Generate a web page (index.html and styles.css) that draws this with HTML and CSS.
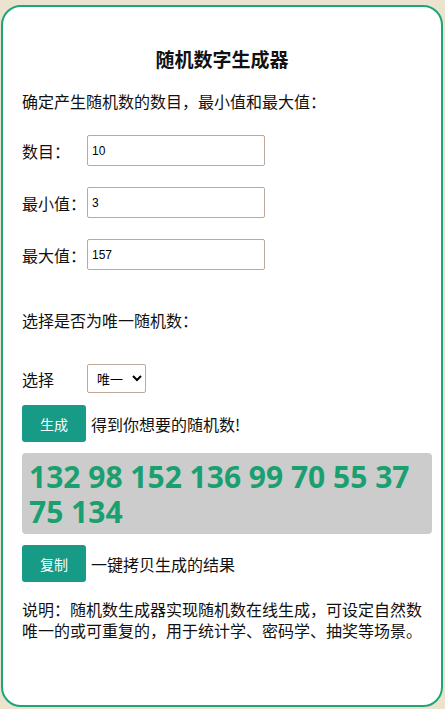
FILE: index.html
```html
<!DOCTYPE html>
<html>
	<head>
		<meta charset="utf-8" />
		<title>随机数字生成器</title>
		<link rel="stylesheet" href="styles.css">
	</head>
	<body>
		<div class="card">
			<h1 class="title">随机数字生成器</h1>
			<p class="intro">确定产生随机数的数目，最小值和最大值：</p>
			<div class="row">
				<label class="label">数目：</label>
				<input class="field" type="text" value="10">
			</div>
			<div class="row">
				<label class="label">最小值：</label>
				<input class="field" type="text" value="3">
			</div>
			<div class="row">
				<label class="label">最大值：</label>
				<input class="field" type="text" value="157">
			</div>
			<p class="question">选择是否为唯一随机数：</p>
			<div class="row select-row">
				<label class="label">选择</label>
				<select class="choice">
					<option>唯一</option>
					<option>可重复</option>
				</select>
			</div>
			<div class="action">
				<button class="btn">生成</button>
				<span class="hint">得到你想要的随机数!</span>
			</div>
			<div class="result">132 98 152 136 99 70 55 37 75 134</div>
			<div class="action">
				<button class="btn">复制</button>
				<span class="hint">一键拷贝生成的结果</span>
			</div>
			<p class="desc">说明：随机数生成器实现随机数在线生成，可设定自然数唯一的或可重复的，用于统计学、密码学、抽奖等场景。</p>
		</div>
	</body>
</html>
```

FILE: styles.css
```css
*{
	margin: 0;
	padding: 0;
	box-sizing: border-box;
}
body{
	background: #ece3cf;
	font-family: "Noto Sans CJK SC", "Noto Sans", sans-serif;
	font-size: 16px;
	color: #111;
	padding: 5px 2px 1px 1px;
}
.card{
	background: #fff;
	border: 2px solid #1da679;
	border-radius: 20px;
	padding: 40px 9px 64px 19px;
}
.title{
	font-size: 19px;
	font-weight: bold;
	line-height: 24px;
	text-align: center;
	padding-right: 10px;
}
.intro{
	margin-top: 18px;
	line-height: 24px;
}
.row{
	display: flex;
	align-items: center;
	height: 31px;
	margin-top: 21px;
}
.intro + .row{
	margin-top: 22px;
}
.label{
	width: 65px;
	flex-shrink: 0;
}
.field{
	width: 178px;
	height: 31px;
	border: 1px solid #bda99b;
	border-radius: 2px;
	padding-left: 4px;
	font-family: "Liberation Sans", Arial, sans-serif;
	font-size: 12px;
	color: #000;
	outline: none;
}
.question{
	margin-top: 38px;
	line-height: 24px;
}
.select-row{
	margin-top: 31px;
}
.choice{
	width: 59px;
	height: 29px;
	border: 1px solid #bda99b;
	border-radius: 2px;
	padding-left: 5px;
	font-family: "Noto Sans CJK SC", sans-serif;
	font-size: 13px;
	background: #fff;
	color: #000;
}
.action{
	display: flex;
	align-items: center;
	margin-top: 11px;
}
.btn{
	width: 64px;
	height: 37px;
	border: none;
	border-radius: 3px;
	background: #179a86;
	color: #fff;
	font-family: "Noto Sans CJK SC", sans-serif;
	font-size: 14px;
}
.hint{
	margin-left: 5px;
	line-height: 24px;
}
.result{
	margin-top: 11px;
	background: #cccccc;
	border-radius: 4px;
	padding: 6px 7px 5px 7px;
	font-family: "Open Sans", sans-serif;
	font-size: 30px;
	font-weight: bold;
	line-height: 35px;
	color: #1aa070;
}
.desc{
	margin-top: 17px;
	line-height: 21px;
}
```
